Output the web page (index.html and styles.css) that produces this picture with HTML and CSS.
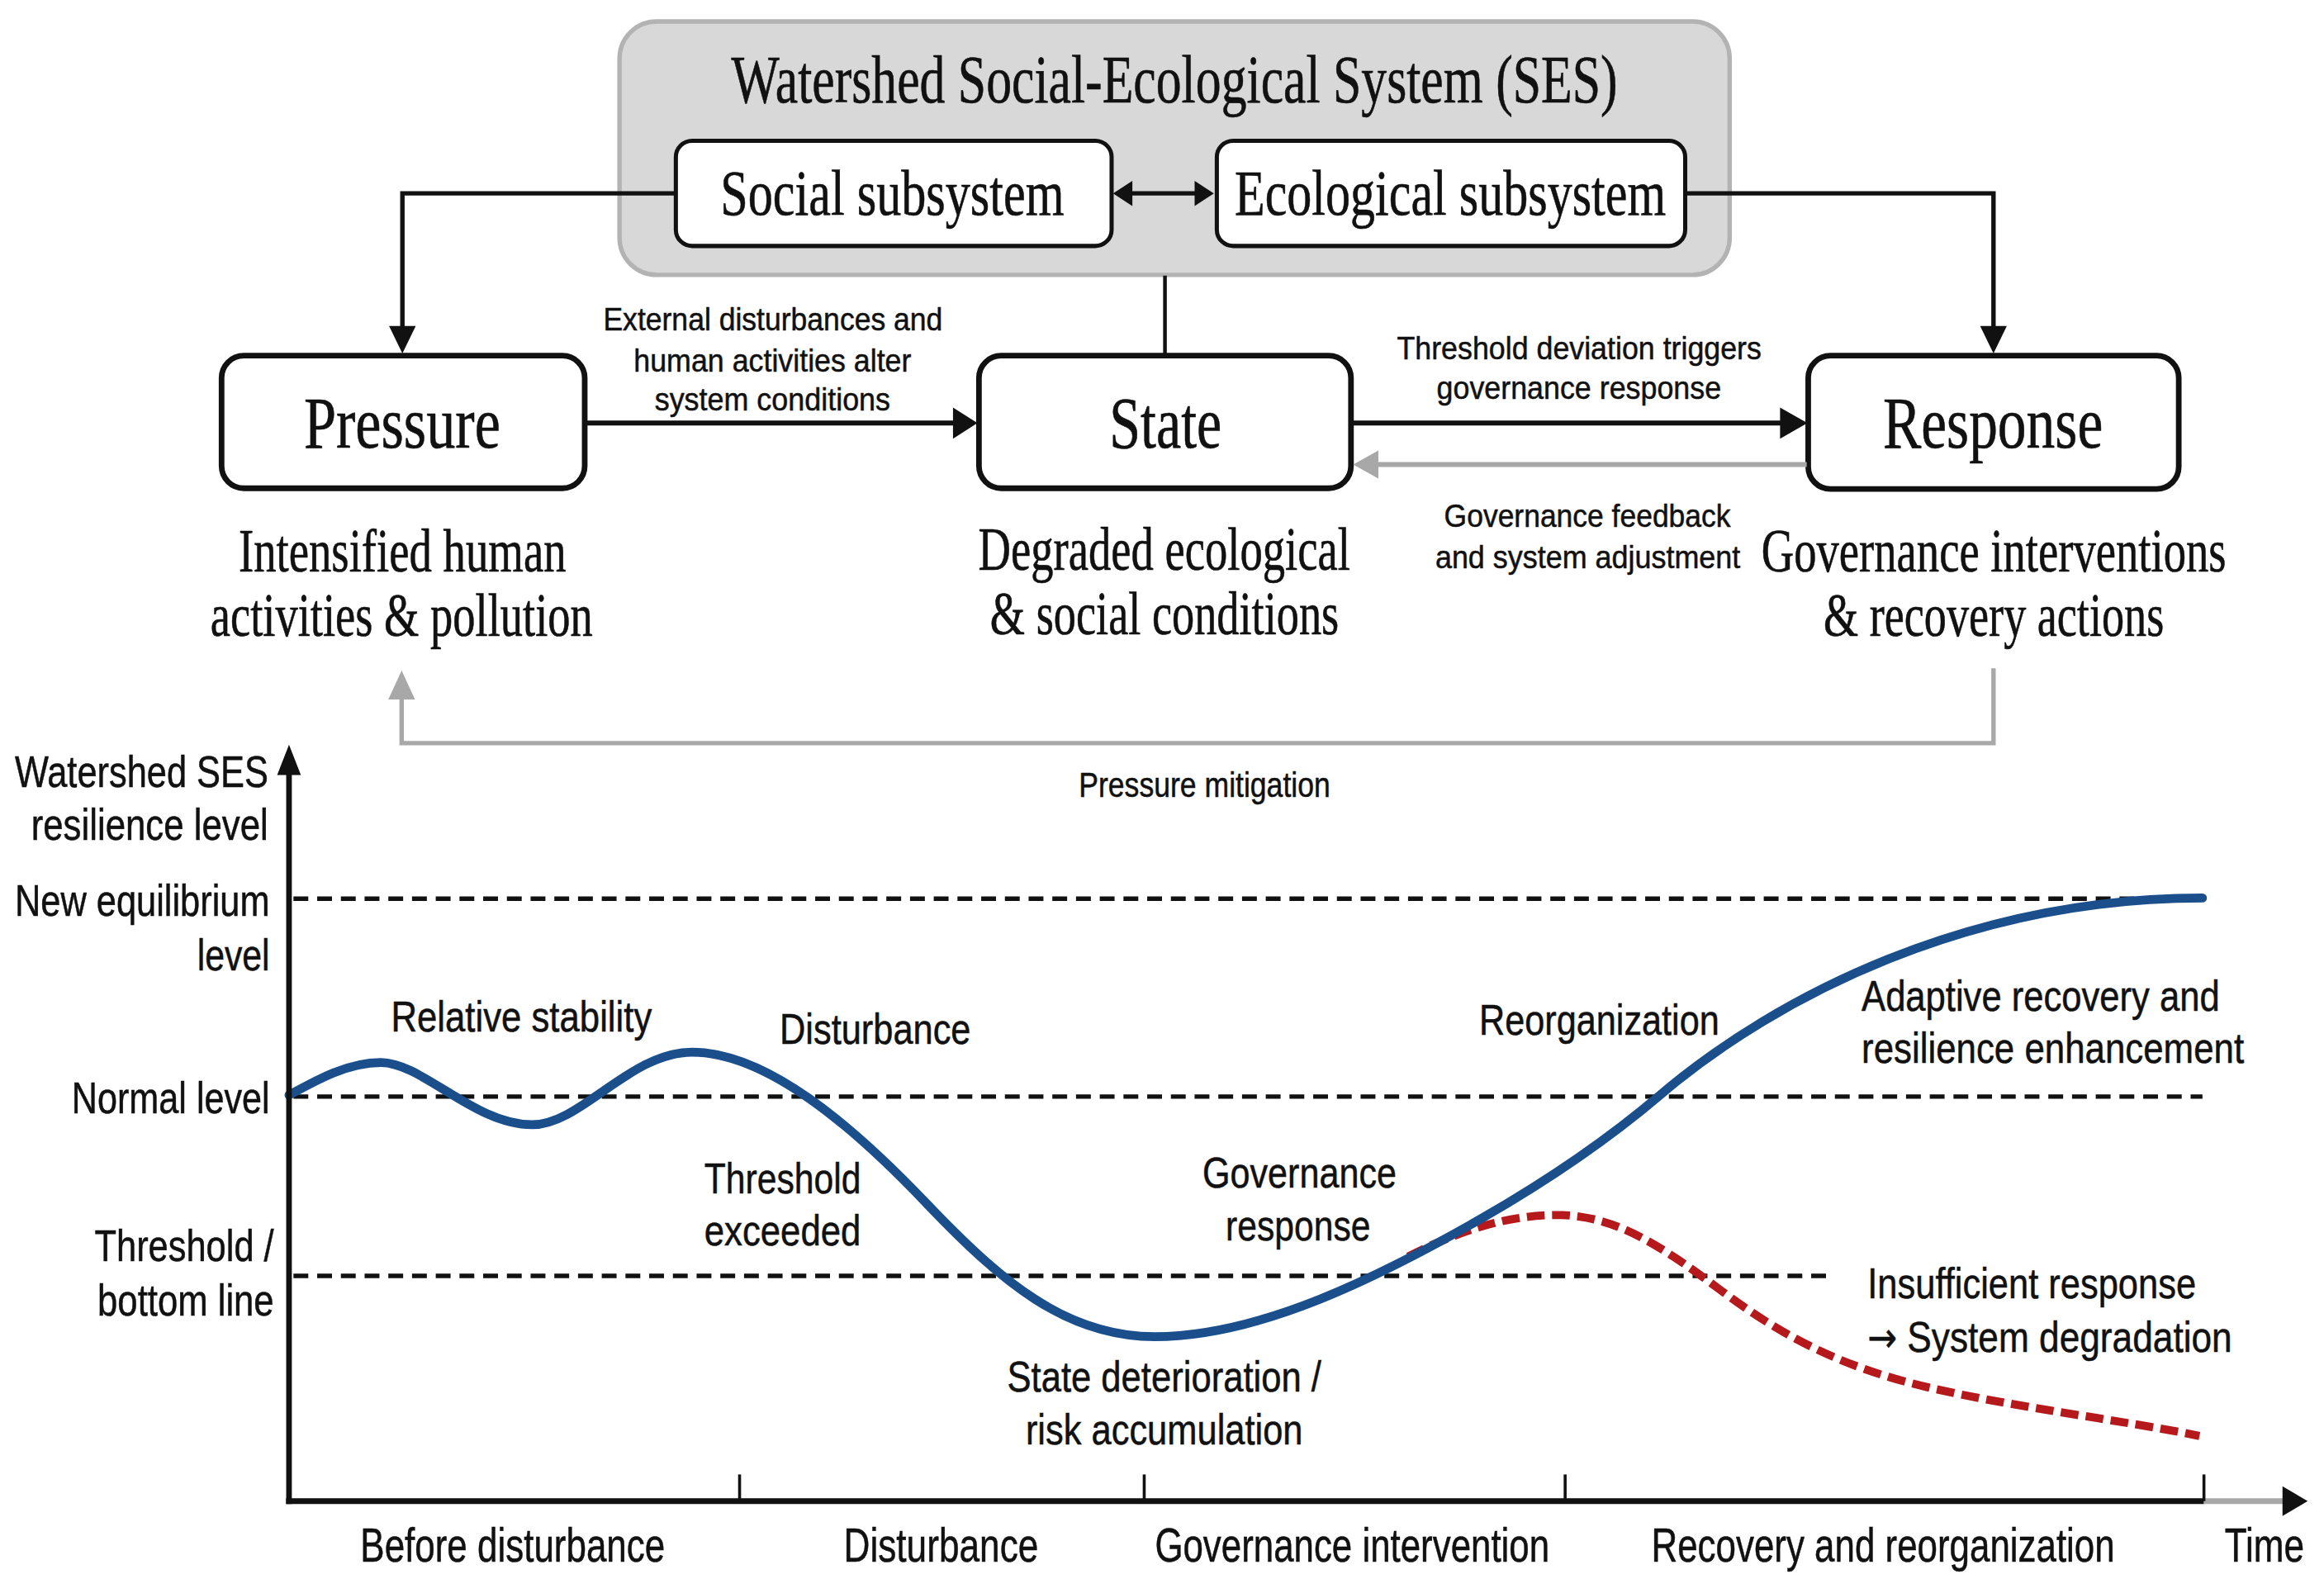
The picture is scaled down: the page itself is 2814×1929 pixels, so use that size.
FILE: index.html
```html
<!DOCTYPE html>
<html lang="en">
<head>
<meta charset="utf-8">
<title>Watershed SES resilience diagram</title>
<link rel="stylesheet" href="styles.css">
</head>
<body>
<main class="page">
<svg class="diagram" viewBox="0 0 1568 1075" preserveAspectRatio="none" xmlns="http://www.w3.org/2000/svg">
  <!-- Top system box -->
  <rect class="ses-box" x="418" y="14.5" width="749" height="171" rx="25"/>
  <text class="serif t-title" x="792.4" y="69" text-anchor="middle" textLength="598" lengthAdjust="spacingAndGlyphs">Watershed Social-Ecological System (SES)</text>

  <rect class="sub-box" x="456" y="95" width="294" height="71" rx="11"/>
  <rect class="sub-box" x="821" y="95" width="316" height="71" rx="11"/>
  <text class="serif t-sub" x="602" y="145" text-anchor="middle" textLength="232" lengthAdjust="spacingAndGlyphs">Social subsystem</text>
  <text class="serif t-sub" x="978.5" y="145" text-anchor="middle" textLength="291" lengthAdjust="spacingAndGlyphs">Ecological subsystem</text>

  <!-- double arrow -->
  <line class="ln" x1="760" y1="130.5" x2="811" y2="130.5"/>
  <polygon class="hd" points="751,130.5 764,122 764,139"/>
  <polygon class="hd" points="819,130.5 806,122 806,139"/>

  <!-- connectors -->
  <polyline class="ln" points="456,130.5 271.5,130.5 271.5,222"/>
  <polygon class="hd" points="262.5,220 280.5,220 271.5,238.5"/>
  <polyline class="ln" points="1137,130.5 1345,130.5 1345,222"/>
  <polygon class="hd" points="1336,220 1354,220 1345,238.5"/>
  <line class="ln-thin" x1="786" y1="186" x2="786" y2="240"/>

  <!-- PSR boxes -->
  <rect class="psr-box" x="149.5" y="240" width="245" height="89.5" rx="15"/>
  <rect class="psr-box" x="660.5" y="240" width="251" height="89.5" rx="15"/>
  <rect class="psr-box" x="1220" y="240" width="250" height="90" rx="15"/>
  <text class="serif t-box" x="271.3" y="302" text-anchor="middle" textLength="132.6" lengthAdjust="spacingAndGlyphs">Pressure</text>
  <text class="serif t-box" x="786.4" y="302" text-anchor="middle" textLength="75.8" lengthAdjust="spacingAndGlyphs">State</text>
  <text class="serif t-box" x="1344.6" y="302" text-anchor="middle" textLength="148.4" lengthAdjust="spacingAndGlyphs">Response</text>

  <!-- horizontal arrows -->
  <line class="ln-mid" x1="394" y1="285.5" x2="645" y2="285.5"/>
  <polygon class="hd" points="643,275 643,296 659.5,285.5"/>
  <line class="ln-mid" x1="911" y1="285.5" x2="1203" y2="285.5"/>
  <polygon class="hd" points="1201,275 1201,296 1219.5,285.5"/>
  <line class="ln-gray" x1="1219" y1="313.5" x2="928" y2="313.5"/>
  <polygon class="hd-gray" points="930,304 930,323 913,313.5"/>

  <text class="sans t-note" x="521.5" y="223" text-anchor="middle" textLength="229" lengthAdjust="spacingAndGlyphs">External disturbances and</text>
  <text class="sans t-note" x="521.2" y="251" text-anchor="middle" textLength="187.3" lengthAdjust="spacingAndGlyphs">human activities alter</text>
  <text class="sans t-note" x="521.2" y="277" text-anchor="middle" textLength="159" lengthAdjust="spacingAndGlyphs">system conditions</text>

  <text class="sans t-note" x="1065.5" y="242.4" text-anchor="middle" textLength="246" lengthAdjust="spacingAndGlyphs">Threshold deviation triggers</text>
  <text class="sans t-note" x="1065.3" y="269.4" text-anchor="middle" textLength="192" lengthAdjust="spacingAndGlyphs">governance response</text>

  <text class="sans t-note" x="1071" y="355.7" text-anchor="middle" textLength="193.3" lengthAdjust="spacingAndGlyphs">Governance feedback</text>
  <text class="sans t-note" x="1071.3" y="383.6" text-anchor="middle" textLength="205.8" lengthAdjust="spacingAndGlyphs">and system adjustment</text>

  <!-- descriptions -->
  <text class="serif t-desc" x="271.5" y="385.5" text-anchor="middle" textLength="221" lengthAdjust="spacingAndGlyphs">Intensified human</text>
  <text class="serif t-desc" x="271" y="429" text-anchor="middle" textLength="258" lengthAdjust="spacingAndGlyphs">activities &amp; pollution</text>
  <text class="serif t-desc" x="785.5" y="384.5" text-anchor="middle" textLength="251" lengthAdjust="spacingAndGlyphs">Degraded ecological</text>
  <text class="serif t-desc" x="785.7" y="428" text-anchor="middle" textLength="235.4" lengthAdjust="spacingAndGlyphs">&amp; social conditions</text>
  <text class="serif t-desc" x="1345.2" y="385.5" text-anchor="middle" textLength="313.6" lengthAdjust="spacingAndGlyphs">Governance interventions</text>
  <text class="serif t-desc" x="1345.2" y="429" text-anchor="middle" textLength="229.7" lengthAdjust="spacingAndGlyphs">&amp; recovery actions</text>

  <!-- pressure mitigation loop -->
  <polyline class="ln-gray-loop" points="1345,451 1345,501.5 271,501.5 271,470"/>
  <polygon class="hd-gray" points="262,472 280,472 271,452.5"/>
  <text class="sans t-mit" x="812.7" y="537.7" text-anchor="middle" textLength="169.7" lengthAdjust="spacingAndGlyphs">Pressure mitigation</text>

  <!-- graph: reference levels -->
  <line class="dash" x1="198" y1="606.5" x2="1486" y2="606.5"/>
  <line class="dash" x1="198" y1="740" x2="1486" y2="740"/>
  <line class="dash" x1="198" y1="861" x2="1232" y2="861"/>

  <!-- y-axis labels -->
  <text class="sans t-ylab" x="181" y="531" text-anchor="end" textLength="171" lengthAdjust="spacingAndGlyphs">Watershed SES</text>
  <text class="sans t-ylab" x="181" y="566.6" text-anchor="end" textLength="160" lengthAdjust="spacingAndGlyphs">resilience level</text>
  <text class="sans t-ylab" x="182" y="618" text-anchor="end" textLength="172" lengthAdjust="spacingAndGlyphs">New equilibrium</text>
  <text class="sans t-ylab" x="182" y="655" text-anchor="end" textLength="49" lengthAdjust="spacingAndGlyphs">level</text>
  <text class="sans t-ylab" x="182" y="751.5" text-anchor="end" textLength="133.6" lengthAdjust="spacingAndGlyphs">Normal level</text>
  <text class="sans t-ylab" x="184.8" y="851" text-anchor="end" textLength="121" lengthAdjust="spacingAndGlyphs">Threshold /</text>
  <text class="sans t-ylab" x="184.8" y="888" text-anchor="end" textLength="119" lengthAdjust="spacingAndGlyphs">bottom line</text>

  <!-- curves -->
  <path class="curve-red" d="M950,848 C985,830 1020,819 1054,820 C1090,821 1120,840 1160,870 C1200,900 1240,922 1300,936 C1360,950 1430,958 1484,969"/>
  <path class="curve-blue" d="M195,739 C215,728 235,717 257,717 C285,717 320,759 359,759 C392,759 425,710 467,710 C517,710 575,759.5 625,812 C675,864.5 719,902 779,902 C850,902 930,862 1000,822 C1040,799 1080,773 1120,739 C1200,671 1330,606 1486,606"/>

  <!-- curve labels -->
  <text class="sans t-lab" x="263.8" y="696" textLength="176" lengthAdjust="spacingAndGlyphs">Relative stability</text>
  <text class="sans t-lab" x="526" y="704.5" textLength="129" lengthAdjust="spacingAndGlyphs">Disturbance</text>
  <text class="sans t-lab" x="528" y="805" text-anchor="middle" textLength="105.7" lengthAdjust="spacingAndGlyphs">Threshold</text>
  <text class="sans t-lab" x="528" y="840.6" text-anchor="middle" textLength="105.7" lengthAdjust="spacingAndGlyphs">exceeded</text>
  <text class="sans t-lab" x="876.8" y="801.3" text-anchor="middle" textLength="131" lengthAdjust="spacingAndGlyphs">Governance</text>
  <text class="sans t-lab" x="875.8" y="837" text-anchor="middle" textLength="97.7" lengthAdjust="spacingAndGlyphs">response</text>
  <text class="sans t-lab" x="785.5" y="938.8" text-anchor="middle" textLength="212" lengthAdjust="spacingAndGlyphs">State deterioration /</text>
  <text class="sans t-lab" x="785.5" y="974.6" text-anchor="middle" textLength="187" lengthAdjust="spacingAndGlyphs">risk accumulation</text>
  <text class="sans t-lab" x="998" y="698.3" textLength="162" lengthAdjust="spacingAndGlyphs">Reorganization</text>
  <text class="sans t-lab" x="1256" y="682.1" textLength="241.6" lengthAdjust="spacingAndGlyphs">Adaptive recovery and</text>
  <text class="sans t-lab" x="1256" y="717" textLength="258" lengthAdjust="spacingAndGlyphs">resilience enhancement</text>
  <text class="sans t-lab" x="1260" y="876" textLength="221.7" lengthAdjust="spacingAndGlyphs">Insufficient response</text>
  <text class="sans t-lab" x="1260" y="912" textLength="246" lengthAdjust="spacingAndGlyphs"><tspan class="arrow-glyph">→</tspan> System degradation</text>

  <!-- axes -->
  <line class="axis" x1="195" y1="1015" x2="195" y2="520"/>
  <polygon class="hd" points="187,523 203,523 195,502.5"/>
  <line class="axis" x1="193" y1="1013" x2="1487" y2="1013"/>
  <line class="axis-gray" x1="1487" y1="1013" x2="1545" y2="1013"/>
  <polygon class="hd" points="1540,1003 1557,1013 1540,1023"/>
  <line class="tick" x1="499" y1="995" x2="499" y2="1013"/>
  <line class="tick" x1="772" y1="995" x2="772" y2="1013"/>
  <line class="tick" x1="1056" y1="995" x2="1056" y2="1013"/>
  <line class="tick" x1="1487" y1="995" x2="1487" y2="1013"/>

  <!-- x-axis labels -->
  <text class="sans t-xlab" x="345.9" y="1054" text-anchor="middle" textLength="205.5" lengthAdjust="spacingAndGlyphs">Before disturbance</text>
  <text class="sans t-xlab" x="634.9" y="1054" text-anchor="middle" textLength="131.4" lengthAdjust="spacingAndGlyphs">Disturbance</text>
  <text class="sans t-xlab" x="912.3" y="1054" text-anchor="middle" textLength="266.2" lengthAdjust="spacingAndGlyphs">Governance intervention</text>
  <text class="sans t-xlab" x="1270.5" y="1054" text-anchor="middle" textLength="312.7" lengthAdjust="spacingAndGlyphs">Recovery and reorganization</text>
  <text class="sans t-xlab" x="1501" y="1054" textLength="53.7" lengthAdjust="spacingAndGlyphs">Time</text>
</svg>
</main>
</body>
</html>
```

FILE: styles.css
```css
html, body {
  margin: 0;
  padding: 0;
  background: #ffffff;
}

.page {
  display: block;
  width: 2814px;
  height: 1929px;
  overflow: hidden;
}

.diagram {
  display: block;
  width: 2814px;
  height: 1929px;
}

.serif {
  font-family: "Liberation Serif", "Times New Roman", serif;
  fill: #111111;
  stroke: #111111;
  stroke-width: 0.35;
}

.sans {
  font-family: "Liberation Sans Narrow", "Arial Narrow", "Liberation Sans", Arial, sans-serif;
  fill: #111111;
  stroke: #111111;
  stroke-width: 0.3;
}

.arrow-glyph {
  font-family: "DejaVu Sans", sans-serif;
  font-size: 28px;
}

.t-title { font-size: 46px; }
.t-sub { font-size: 44px; }
.t-box { font-size: 50px; }
.t-desc { font-size: 41px; }
.t-note { font-size: 22px; }
.t-mit { font-size: 24px; }
.t-lab { font-size: 29px; }
.t-ylab { font-size: 30px; }
.t-xlab { font-size: 32px; }

.ses-box {
  fill: #d8d8d8;
  stroke: #b3b3b3;
  stroke-width: 3;
}

.sub-box {
  fill: #ffffff;
  stroke: #111111;
  stroke-width: 2.8;
}

.psr-box {
  fill: #ffffff;
  stroke: #111111;
  stroke-width: 3.8;
}

.ln {
  fill: none;
  stroke: #111111;
  stroke-width: 3;
}

.ln-thin {
  stroke: #111111;
  stroke-width: 2.5;
}

.ln-mid {
  stroke: #111111;
  stroke-width: 3.3;
}

.hd {
  fill: #111111;
}

.ln-gray {
  stroke: #a8a8a8;
  stroke-width: 3.3;
}

.ln-gray-loop {
  fill: none;
  stroke: #a8a8a8;
  stroke-width: 3;
}

.hd-gray {
  fill: #a8a8a8;
}

.dash {
  stroke: #111111;
  stroke-width: 3;
  stroke-dasharray: 10 6;
}

.curve-blue {
  fill: none;
  stroke: #1b4f8c;
  stroke-width: 6;
  stroke-linecap: round;
}

.curve-red {
  fill: none;
  stroke: #b5191c;
  stroke-width: 5.5;
  stroke-dasharray: 12 5;
}

.axis {
  stroke: #111111;
  stroke-width: 3.8;
}

.axis-gray {
  stroke: #a8a8a8;
  stroke-width: 3.8;
}

.tick {
  stroke: #111111;
  stroke-width: 2;
}
```
